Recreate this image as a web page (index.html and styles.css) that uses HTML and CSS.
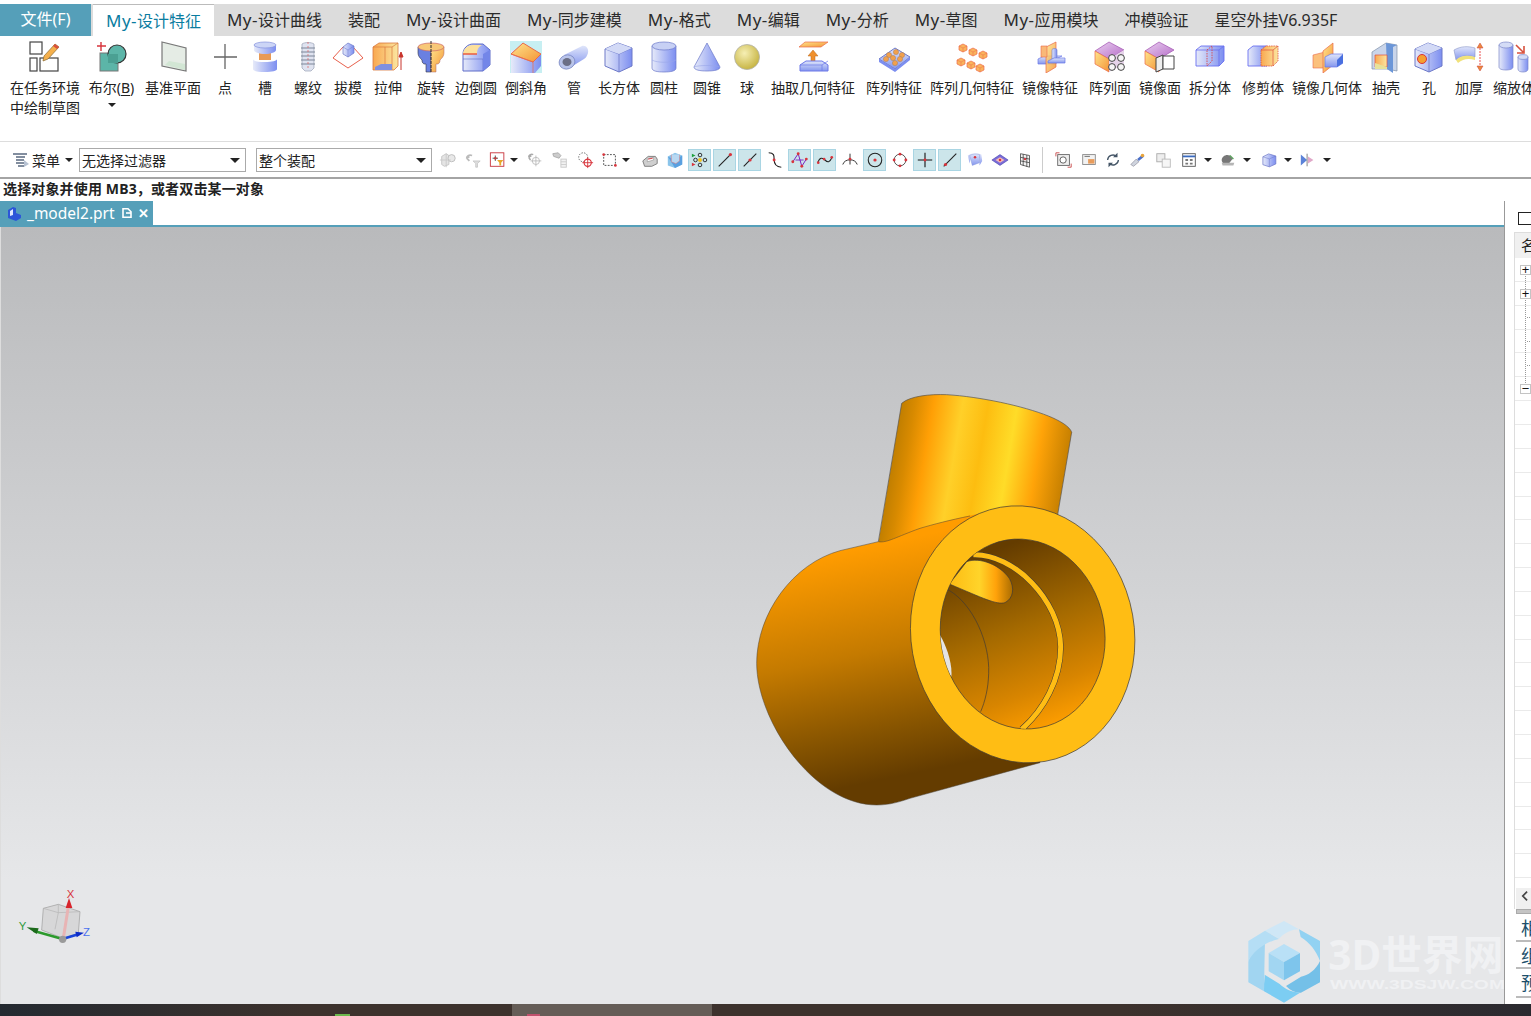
FILE: index.html
```html
<!DOCTYPE html>
<html lang="zh">
<head>
<meta charset="utf-8">
<title>NX</title>
<link rel="stylesheet" href="styles.css">
</head>
<body>
<svg class="defs" aria-hidden="true">
<defs>
<linearGradient id="gb" x1="0" y1="0" x2="1" y2="0"><stop offset="0" stop-color="#e6eaf9"/><stop offset="1" stop-color="#7c8ef0"/></linearGradient>
<linearGradient id="gbv" x1="0" y1="0" x2="0" y2="1"><stop offset="0" stop-color="#dfe5fa"/><stop offset="1" stop-color="#8496ee"/></linearGradient>
<linearGradient id="go" x1="0" y1="0" x2="1" y2="1"><stop offset="0" stop-color="#ffe48c"/><stop offset="1" stop-color="#f39436"/></linearGradient>
<linearGradient id="gy" x1="0" y1="0" x2="1" y2="0"><stop offset="0" stop-color="#f9a850"/><stop offset="1" stop-color="#fbe6a0"/></linearGradient>
<radialGradient id="gs" cx=".4" cy=".35" r=".7"><stop offset="0" stop-color="#f6efb4"/><stop offset="1" stop-color="#c4b13c"/></radialGradient>
<linearGradient id="gp" x1="0" y1="0" x2="1" y2="1"><stop offset="0" stop-color="#ead0f0"/><stop offset="1" stop-color="#b56cc8"/></linearGradient>
<g id="cube"><path d="M2 6l8-4 10 3v11l-9 4-9-3z" fill="url(#gb)" stroke="#6c78c8"/><path d="M2 6l9 3 9-4M11 9v11" fill="none" stroke="#6c78c8" stroke-width=".7"/></g>
<g id="ocube"><path d="M0 3l4-2 4 2v4l-4 2-4-2z" fill="#f9b45c" stroke="#ee6a4a" stroke-width=".7"/><path d="M0 3l4 2 4-2M4 5v4" fill="none" stroke="#ee6a4a" stroke-width=".5"/></g>
<g id="slab"><path d="M1 5l6-4h16l6 4v6H1z" fill="url(#gbv)" stroke="#6c78e8"/><path d="M1 5h22l6-4M23 5v6" fill="none" stroke="#6c78e8" stroke-width=".7"/></g>
</defs>
</svg>
<div class="app">
  <nav class="tabs">
    <span class="tab file">文件(F)</span>
    <span class="tab active"><span class="ltn">My-</span>设计特征</span>
    <span class="tab"><span class="ltn">My-</span>设计曲线</span>
    <span class="tab">装配</span>
    <span class="tab"><span class="ltn">My-</span>设计曲面</span>
    <span class="tab"><span class="ltn">My-</span>同步建模</span>
    <span class="tab"><span class="ltn">My-</span>格式</span>
    <span class="tab"><span class="ltn">My-</span>编辑</span>
    <span class="tab"><span class="ltn">My-</span>分析</span>
    <span class="tab"><span class="ltn">My-</span>草图</span>
    <span class="tab"><span class="ltn">My-</span>应用模块</span>
    <span class="tab">冲模验证</span>
    <span class="tab">星空外挂V6.935F</span>
  </nav>

  <section class="ribbon">
    <div class="item"><svg class="ic" viewBox="0 0 32 32"><g fill="#fff" stroke="#444" stroke-width="1.2"><rect x="1" y="1" width="12" height="12"/><rect x="1" y="17" width="7" height="13"/><rect x="11" y="17" width="18" height="13"/></g><path d="M26 3l4 3-11 12-5 2 1-5z" fill="#f5b04c" stroke="#8a6a30" stroke-width=".7"/><path d="M26 3l4 3-2 2-4-3z" fill="#d9503c"/></svg><span class="lb">在任务环境<br>中绘制草图</span></div>
    <div class="item"><svg class="ic" viewBox="0 0 32 32"><path d="M5 1v9M1 5h9" stroke="#d8343c" stroke-width="1.4"/><rect x="4" y="12" width="18" height="18" fill="#5cb5a8" stroke="#777"/><circle cx="21" cy="13" r="9" fill="#5cb5a8" stroke="#333" stroke-width="1.2"/><rect x="12" y="13" width="10" height="9" fill="#4ba093"/></svg><span class="lb">布尔(<u>B</u>)</span><i class="drop"></i></div>
    <div class="item"><svg class="ic" viewBox="0 0 32 32"><path d="M5 1l24 6v23L5 25z" fill="#e5ece5" stroke="#777" stroke-width="1.2"/><path d="M12 20l16 3v6L8 24z" fill="#d2e6d4"/></svg><span class="lb">基准平面</span></div>
    <div class="item"><svg class="ic" viewBox="0 0 32 32"><path d="M5 16h23M16 3v25" stroke="#666" stroke-width="1.3"/></svg><span class="lb">点</span></div>
    <div class="item"><svg class="ic" viewBox="0 0 32 32"><rect x="10" y="11" width="12" height="8" fill="#e89a56"/><path d="M5 4h22v5c0 2-5 4-11 4S5 11 5 9z" fill="url(#gb)"/><ellipse cx="16" cy="4" rx="11" ry="3" fill="#ccd5f6" stroke="#8592dc" stroke-width=".7"/><path d="M4 18c0 2 5 3 12 3s12-1 12-3v10c0 2-5 3-12 3S4 30 4 28z" fill="url(#gb)"/></svg><span class="lb">槽</span></div>
    <div class="item"><svg class="ic" viewBox="0 0 32 32"><path d="M10 3c3-2 9-2 12 0v24l-3 3h-6l-3-3z" fill="#dfe3f0" stroke="#9aa0b4" stroke-width=".7"/><path d="M9 7h14M9 11h14M9 15h14M9 19h14M9 23h14" stroke="#7d8598" stroke-width="1.2"/><path d="M16 1v28" stroke="#e06060" stroke-width=".7" stroke-dasharray="2 2"/></svg><span class="lb">螺纹</span></div>
    <div class="item"><svg class="ic" viewBox="0 0 32 32"><path d="M1 17l15 10 15-10L21 6H11z" fill="#fff" stroke="#e8604c"/><path d="M11 6l5-4 6 3v7l-6 4-5-3z" fill="url(#gb)" stroke="#6c78c8" stroke-width=".7"/><path d="M11 6l5 3 6-4M16 9v7" fill="none" stroke="#6c78c8" stroke-width=".5"/></svg><span class="lb">拔模</span></div>
    <div class="item"><svg class="ic" viewBox="0 0 32 32"><path d="M1 6l6-4h19v23l-4 4H1z" fill="url(#gy)" stroke="#d87a40" stroke-width=".8"/><path d="M1 6h19l6-4M13 6v17M20 6v23" fill="none" stroke="#d87a40" stroke-width=".7"/><path d="M3 26l6-3h11v6H3z" fill="#7f90e0"/><path d="M29 29V12m-2 4l2-5 2 5z" stroke="#c8342c" fill="#c8342c"/></svg><span class="lb">拉伸</span></div>
    <div class="item"><svg class="ic" viewBox="0 0 32 32"><path d="M3 6h13v25h-5v-8H9c-2-1-2-3-2-4-2-2-4-4-4-7z" fill="#6a80e0" stroke="#334" stroke-width=".6"/><path d="M16 6h13v6c0 3-2 5-4 7 0 1 0 3-2 4h-2v8h-5z" fill="url(#go)" stroke="#a66" stroke-width=".5"/><ellipse cx="16" cy="6" rx="13" ry="4" fill="#f8c878" stroke="#c66" stroke-width=".7"/><path d="M16 0v32" stroke="#333" stroke-width="1" stroke-dasharray="3 1"/></svg><span class="lb">旋转</span></div>
    <div class="item"><svg class="ic" viewBox="0 0 32 32"><path d="M3 13c0-6 5-10 10-10h10l7 6v15l-7 6H3z" fill="url(#gb)" stroke="#5e6cc8" stroke-width="1"/><path d="M3 13c0-5 5-9 10-9h9c-4 2-5 5-5 9z" fill="#fce09c"/><path d="M3 13h14" stroke="#ea5c40" stroke-width="1.5"/><path d="M3 18h20v12" fill="none" stroke="#5e6cc8" stroke-width=".6"/><path d="M23 13v17l7-6V9z" fill="#7386e8"/></svg><span class="lb">边倒圆</span></div>
    <div class="item"><svg class="ic" viewBox="0 0 32 32"><rect width="32" height="32" fill="#c7eff2"/><path d="M1 9v23h24l6-7V14z" fill="url(#gb)"/><path d="M1 13L13 2l18 11-8 8z" fill="url(#go)" stroke="#ea6a4a"/><path d="M23 21v11M1 13l22 8" fill="none" stroke="#ea6a4a" stroke-width=".7"/></svg><span class="lb">倒斜角</span></div>
    <div class="item"><svg class="ic" viewBox="0 0 32 32"><path d="M6 14L24 5c4-1 7 3 6 7-1 3-2 5-4 6L13 26z" fill="url(#gbv)"/><ellipse cx="9" cy="21" rx="8" ry="7" fill="#b9c4ea" stroke="#7583c0" stroke-width=".7" transform="rotate(-20 9 21)"/><ellipse cx="9" cy="21" rx="4.5" ry="4" fill="#6b6f86"/></svg><span class="lb">管</span></div>
    <div class="item"><svg class="ic" viewBox="0 0 32 32"><path d="M2 8l13-6 14 5v18l-13 6-14-6z" fill="url(#gb)" stroke="#6c78c8"/><path d="M2 8l14 5 13-6M16 13v18" fill="none" stroke="#6c78c8" stroke-width=".8"/><path d="M2 8l13-6 14 5-13 6z" fill="#d3daf6"/></svg><span class="lb">长方体</span></div>
    <div class="item"><svg class="ic" viewBox="0 0 32 32"><path d="M4 5v22c0 3 5 4 12 4s12-1 12-4V5z" fill="url(#gb)" stroke="#6c78c8" stroke-width=".7"/><ellipse cx="16" cy="5" rx="12" ry="4" fill="#c7d0f4" stroke="#6c78c8" stroke-width=".7"/><path d="M4 19c5 3 19 3 24 0" fill="none" stroke="#99a6e8" stroke-width=".6"/></svg><span class="lb">圆柱</span></div>
    <div class="item"><svg class="ic" viewBox="0 0 32 32"><path d="M16 2L3 26c0 3 6 4 13 4s13-1 13-4z" fill="url(#gb)" stroke="#6c78c8" stroke-width=".7"/><path d="M3 26c4-2 22-2 26 0" fill="none" stroke="#99a6e8" stroke-width=".6"/></svg><span class="lb">圆锥</span></div>
    <div class="item"><svg class="ic" viewBox="0 0 32 32"><circle cx="16" cy="16" r="12.5" fill="url(#gs)" stroke="#b0b0a8" stroke-width=".8"/></svg><span class="lb">球</span></div>
    <div class="item"><svg class="ic" viewBox="0 0 32 32"><path d="M2 6l6-5h23l-7 5z" fill="url(#go)" stroke="#ea6a4a" stroke-width=".7"/><path d="M16 9l-5 6h3v6h4v-6h3z" fill="#f0902c" stroke="#b86a20" stroke-width=".5"/><g transform="translate(2 19)"><use href="#slab"/></g></svg><span class="lb">抽取几何特征</span></div>
    <div class="item"><svg class="ic" viewBox="0 0 32 32"><path d="M1 18L17 7l15 9-15 12z" fill="url(#gbv)" stroke="#6c78c8"/><path d="M1 18v3l16 10 15-12v-3L17 28z" fill="#7c8ef0"/><g fill="#f2a04c" stroke="#a88060" stroke-width=".5"><circle cx="11" cy="14" r="2.6"/><circle cx="18" cy="11" r="2.6"/><circle cx="24" cy="14" r="2.6"/><circle cx="8" cy="18" r="2.6"/><circle cx="15" cy="17" r="2.6"/><circle cx="22" cy="18" r="2.6"/><circle cx="17" cy="22" r="2.6"/></g></svg><span class="lb">阵列特征</span></div>
    <div class="item"><svg class="ic" viewBox="0 0 32 32"><use href="#ocube" x="3" y="2"/><use href="#ocube" x="13" y="6"/><use href="#ocube" x="23" y="9"/><use href="#ocube" x="1" y="16"/><use href="#ocube" x="11" y="19"/><use href="#ocube" x="20" y="22"/></svg><span class="lb">阵列几何特征</span></div>
    <div class="item"><svg class="ic" viewBox="0 0 32 32"><path d="M4 18l6-3h18l-6 3v5H4z" fill="url(#gbv)" stroke="#6c78e8" stroke-width=".7"/><path d="M12 6l10-5v25l-10 6z" fill="url(#go)" fill-opacity=".85" stroke="#ea6a4a" stroke-width=".7"/><path d="M7 5h6v11H7z" fill="#f9b878" stroke="#ea6a4a" stroke-width=".6"/><path d="M18 9c0-2 5-2 5 0v9h-5z" fill="url(#gb)" stroke="#6c78c8" stroke-width=".6"/><path d="M14 20l6-3h11v5H14z" fill="url(#gbv)" stroke="#6c78e8" stroke-width=".7"/></svg><span class="lb">镜像特征</span></div>
    <div class="item"><svg class="ic" viewBox="0 0 32 32"><path d="M1 10l14-9 15 8-15 9z" fill="url(#gp)" stroke="#a050b0" stroke-width=".7"/><path d="M1 10l14 8v13L1 23z" fill="url(#go)" stroke="#ea6a4a" stroke-width=".7"/><path d="M15 18l15-9v14l-15 8z" fill="#e6d4ea"/><g fill="#f6f6f6" stroke="#444" stroke-width="1"><circle cx="18" cy="17" r="3.4"/><circle cx="27" cy="17" r="3.4"/><circle cx="18" cy="26" r="3.4"/><circle cx="27" cy="26" r="3.4"/></g></svg><span class="lb">阵列面</span></div>
    <div class="item"><svg class="ic" viewBox="0 0 32 32"><path d="M1 10l14-9 15 8-15 9z" fill="url(#gp)" stroke="#a050b0" stroke-width=".7"/><path d="M1 10l14 8v13L1 23z" fill="url(#go)" stroke="#ea6a4a" stroke-width=".7"/><path d="M12 17l7-3v14l-7 3z" fill="#eee" stroke="#444"/><path d="M19 15h11v13H19z" fill="#fff" stroke="#444"/></svg><span class="lb">镜像面</span></div>
    <div class="item"><svg class="ic" viewBox="0 0 32 32"><path d="M2 9l5-4h23v15l-5 5H2z" fill="url(#gb)" stroke="#6a70f0" stroke-width=".9"/><path d="M2 9h23l5-4M25 9v16" fill="none" stroke="#6a70f0" stroke-width=".8"/><path d="M13 9l5-4v15l-5 5z" fill="none" stroke="#d8484c" stroke-width=".9" stroke-dasharray="1.5 1"/></svg><span class="lb">拆分体</span></div>
    <div class="item"><svg class="ic" viewBox="0 0 32 32"><path d="M1 9l5-4h14v20H1z" fill="url(#gb)" stroke="#6a70f0" stroke-width=".9"/><path d="M14 9l5-4h12v15l-5 5H14z" fill="url(#gy)" stroke="#e05040" stroke-width=".8" stroke-dasharray="1.5 .8"/><path d="M14 9h12l5-4M26 9v16" fill="none" stroke="#e05040" stroke-width=".7"/></svg><span class="lb">修剪体</span></div>
    <div class="item"><svg class="ic" viewBox="0 0 32 32"><path d="M2 14l12-3v16H2z" fill="#fbc07c" stroke="#ea6a4a" stroke-width=".6"/><path d="M12 10l10-8v22l-10 8z" fill="url(#go)" stroke="#ea6a4a" stroke-width=".7"/><path d="M14 16l6-3h12v9l-6 4H14z" fill="url(#gbv)" stroke="#6c78e8" stroke-width=".7"/><path d="M26 19l6-6v9l-6 4z" fill="#4a70e0"/></svg><span class="lb">镜像几何体</span></div>
    <div class="item"><svg class="ic" viewBox="0 0 32 32"><path d="M2 11l14-9 11 2v26l-10-2H2z" fill="#c9d5ea" stroke="#8090a8" stroke-width=".7"/><path d="M16 2l11 2-4 2v26l-6-4z" fill="#6b96d8"/><path d="M5 14h12v12H5z" fill="url(#gy)" stroke="#e05040" stroke-width=".7"/><path d="M5 22l12 4v2H5z" fill="#e7e29a"/></svg><span class="lb">抽壳</span></div>
    <div class="item"><svg class="ic" viewBox="0 0 32 32"><path d="M2 8l13-6 14 5v18l-13 6-14-6z" fill="url(#gb)" stroke="#6c78c8"/><path d="M2 8l14 5 13-6M16 13v18" fill="none" stroke="#6c78c8" stroke-width=".8"/><path d="M2 8l13-6 14 5-13 6z" fill="#d3daf6"/><circle cx="9" cy="18" r="4.5" fill="#f5a030" stroke="#d8343c"/></svg><span class="lb">孔</span></div>
    <div class="item"><svg class="ic" viewBox="0 0 32 32"><path d="M1 9c7-4 14-4 21-2v9c-7-2-14-2-19 3z" fill="url(#gbv)" stroke="#8a96c8" stroke-width=".6"/><path d="M3 19c5-5 12-5 19-3v3c-7-2-12-1-17 3z" fill="#f1e27a"/><path d="M27 2l-3 5h6zM27 30l-3-5h6z" fill="#ec8a3c" stroke="#c8403c" stroke-width=".5"/><path d="M27 7v18" stroke="#ec5050" stroke-dasharray="2 1"/></svg><span class="lb">加厚</span></div>
    <div class="item"><svg class="ic" viewBox="0 0 32 32"><path d="M1 4v22c0 2 3 3 7 3s7-1 7-3V4z" fill="url(#gb)" stroke="#7c88c8" stroke-width=".7"/><ellipse cx="8" cy="4" rx="7" ry="3" fill="#d4dcf6" stroke="#7c88c8" stroke-width=".7"/><path d="M20 16v12c0 2 2 3 5 3s5-1 5-3V16z" fill="url(#gb)" stroke="#7c88c8" stroke-width=".7"/><ellipse cx="25" cy="16" rx="5" ry="2.4" fill="#d4dcf6" stroke="#7c88c8" stroke-width=".7"/><path d="M18 4l7 7m1-6v7h-7" fill="none" stroke="#d8503c" stroke-width="1.6"/></svg><span class="lb">缩放体</span></div>
  </section>

  <section class="toolbar">
    <svg class="menu-ic" viewBox="0 0 18 16"><path d="M1 2h14M4 5h9M4 8h8M4 11h8M6 14h6" stroke="#5a6a80" stroke-width="1.3"/><path d="M12 8l5 4-5 3z" fill="#b7c2d2"/></svg>
    <span class="menu-t">菜单</span><i class="caret menu-c"></i>
    <div class="select s1"><span>无选择过滤器</span><i class="caret"></i></div>
    <div class="select s2"><span>整个装配</span><i class="caret"></i></div>
    <div class="tb"><svg viewBox="0 0 20 20"><path d="M3 6l5-3 3 2v10l-5 2-3-2z" fill="#e4e4e4" stroke="#c4c4c4"/><circle cx="14" cy="8" r="4" fill="#e8e8e8" stroke="#bbb"/><path d="M1 10h12M8 3v15" stroke="#c8c8c8"/></svg></div>
    <div class="tb"><svg viewBox="0 0 20 20"><path d="M3 8c0-3 3-4 6-3M3 8l3-2M3 8l3 3" fill="none" stroke="#bbb" stroke-width="2"/><path d="M10 11h8l-3 3v4h-2v-4z" fill="#ddd" stroke="#bbb" stroke-width=".7"/></svg></div>
    <div class="tb"><svg viewBox="0 0 20 20"><rect x="1.5" y="2" width="15" height="15" fill="#fff" stroke="#c8343c"/><path d="M7 5v6M4 8h6" stroke="#444"/><circle cx="7" cy="8" r="1.4" fill="#c83c3c"/><path d="M9 10h7l-2.500 3v3h-2v-3z" fill="#e8a828"/></svg></div>
    <i class="caret tc"></i>
    <div class="tb"><svg viewBox="0 0 20 20"><path d="M3 7c0-3 3-4 5-3M3 7l3-2M3 7l2 3" fill="none" stroke="#aaa" stroke-width="1.700"/><circle cx="11" cy="11" r="4" fill="none" stroke="#bbb"/><path d="M11 5v12M5 11h12" stroke="#bbb"/></svg></div>
    <div class="tb"><svg viewBox="0 0 20 20"><path d="M2 3l6-1 3 3-2 3-6-2z" fill="#ccc" stroke="#aaa"/><rect x="11" y="9" width="6" height="9" fill="#f2f2f2" stroke="#c8c8c8"/><path d="M11 12h6M11 15h6" stroke="#ccc"/></svg></div>
    <div class="tb"><svg viewBox="0 0 20 20"><circle cx="8" cy="7" r="5" fill="none" stroke="#555" stroke-dasharray="1.500 1.500"/><circle cx="13" cy="13" r="4" fill="#fff" stroke="#d8343c" stroke-width="1.300"/><path d="M13 7v12M7 13h12" stroke="#d8343c"/></svg></div>
    <div class="tb"><svg viewBox="0 0 20 20"><rect x="3" y="4" width="13" height="12" fill="none" stroke="#444" stroke-dasharray="2 1.500"/><circle cx="3" cy="4" r="1.500" fill="#d8343c"/><circle cx="16" cy="16" r="1.500" fill="#d8343c"/></svg></div>
    <i class="caret tc wide"></i>
    <div class="tb"><svg viewBox="0 0 20 20"><path d="M2 11l6-5h8l2 3v5l-6 3H4z" fill="#cfcfcf" stroke="#777"/><path d="M7 9l7-2v3l-7 2z" fill="#fff" stroke="#888" stroke-width=".6"/><path d="M8 9l5-1" stroke="#d8343c"/></svg></div>
    <div class="tb"><svg viewBox="0 0 20 20"><path d="M2 6l8-4 8 3v10l-8 4-8-3z" fill="#8ac4ea"/><path d="M2 6l8 4 8-5v10l-8 4z" fill="#5aa0e0"/><path d="M6 4v8l5 2 4-3V4" fill="#b8d8f2" stroke="#e08080" stroke-width=".6"/></svg></div>
    <div class="tb"><b class="on"></b><svg viewBox="0 0 20 20"><g fill="none" stroke="#222"><circle cx="10" cy="4.500" r="2"/><circle cx="10" cy="15.500" r="2"/><circle cx="15.500" cy="10" r="2"/><circle cx="5" cy="10" r="2"/></g><circle cx="10" cy="10" r="2.200" fill="#f2c21c"/><path d="M1 3l4 2-4 2z" fill="#1fa03c"/><path d="M1 13l4 2-4 2z" fill="#d8343c"/></svg></div>
    <div class="tb"><b class="on"></b><svg viewBox="0 0 20 20"><path d="M3 17L16 4" stroke="#222" stroke-width="1.200"/><circle cx="16" cy="4" r="1.800" fill="#d8343c"/></svg></div>
    <div class="tb"><b class="on"></b><svg viewBox="0 0 20 20"><path d="M3 17L17 3" stroke="#222" stroke-width="1.200"/><circle cx="10" cy="10" r="1.800" fill="#d8343c"/></svg></div>
    <div class="tb"><svg viewBox="0 0 20 20"><path d="M3 2c6 0 6 3 6 7s1 9 8 9" fill="none" stroke="#222" stroke-width="1.200"/><circle cx="9" cy="10" r="1.600" fill="#d8343c"/></svg></div>
    <div class="tb"><b class="on"></b><svg viewBox="0 0 20 20"><path d="M2 12l6-9 4 14 5-8" fill="none" stroke="#7a20c0" stroke-width="1.100"/><path d="M5 10h9" stroke="#7a20c0"/><g fill="#d8343c"><circle cx="2" cy="12" r="1.600"/><circle cx="8" cy="3" r="1.600"/><circle cx="12" cy="17" r="1.600"/><circle cx="17" cy="9" r="1.600"/></g></svg></div>
    <div class="tb"><b class="on"></b><svg viewBox="0 0 20 20"><path d="M2 13c2-6 5-6 8-3s5 3 8-3" fill="none" stroke="#222" stroke-width="1.200"/><g fill="#d8343c"><circle cx="2.500" cy="13" r="1.500"/><circle cx="9" cy="9" r="1.500"/><circle cx="17.500" cy="7" r="1.500"/></g></svg></div>
    <div class="tb"><svg viewBox="0 0 20 20"><path d="M2 15c2-7 14-7 16 0M10 3v12" fill="none" stroke="#333" stroke-width="1.100"/><circle cx="10" cy="9" r="1.600" fill="#d8343c"/></svg></div>
    <div class="tb"><b class="on"></b><svg viewBox="0 0 20 20"><circle cx="10" cy="10" r="7.500" fill="none" stroke="#222" stroke-width="1.200"/><circle cx="10" cy="10" r="1.800" fill="#d8343c"/></svg></div>
    <div class="tb"><svg viewBox="0 0 20 20"><circle cx="10" cy="10" r="6.500" fill="none" stroke="#555" stroke-width="1.100"/><g fill="#d8343c"><circle cx="10" cy="3.500" r="1.600"/><circle cx="3.500" cy="10" r="1.600"/><circle cx="16.500" cy="10" r="1.600"/><circle cx="10" cy="16.500" r="1.600"/></g></svg></div>
    <div class="tb"><b class="on"></b><svg viewBox="0 0 20 20"><path d="M2 10h16M10 2v16" stroke="#111" stroke-width="1.200"/><circle cx="10" cy="10" r="1.600" fill="#d8343c"/></svg></div>
    <div class="tb"><b class="on"></b><svg viewBox="0 0 20 20"><path d="M3 17L17 3" stroke="#222" stroke-width="1.200"/><circle cx="5" cy="15" r="1.800" fill="#d8343c"/></svg></div>
    <div class="tb"><svg viewBox="0 0 20 20"><path d="M2 5c5-3 10-3 15-1l1 7-3 5V8C11 5 6 6 5 8l-1 6z" fill="url(#gbv)"/><path d="M4 5c4-2 7-2 11-1v9l-8 3z" fill="url(#gbv)" stroke="#8a9ad8" stroke-width=".5"/><circle cx="10" cy="7" r="1.400" fill="#d8343c"/></svg></div>
    <div class="tb"><svg viewBox="0 0 20 20"><path d="M1 10l9-6 9 6-9 6z" fill="#7c6cd8" stroke="#4a4ab0" stroke-width=".7"/><path d="M5 10l5-3 5 3-5 3z" fill="#f4bcb8"/><circle cx="10" cy="10" r="1.400" fill="#d8343c"/></svg></div>
    <div class="tb"><svg viewBox="0 0 20 20"><path d="M5 3l10 2v13L5 15zM5 7l10 2M5 11l10 2M8 3.500v13M12 4.500v13" fill="#f4f4f4" stroke="#333" stroke-width=".8"/><circle cx="10" cy="9" r="1.300" fill="#d8343c"/></svg></div>
    <i class="sep"></i>
    <div class="tb"><svg viewBox="0 0 20 20"><rect x="3" y="4" width="13" height="12" fill="#eee" stroke="#666"/><circle cx="9" cy="10" r="3.500" fill="#fff" stroke="#555"/><path d="M1 2h4M1 2v4M18 18h-4M18 18v-4" stroke="#c84848"/></svg></div>
    <div class="tb"><svg viewBox="0 0 20 20"><rect x="3" y="4" width="14" height="11" fill="#f2f2f2" stroke="#888"/><path d="M9 9h7v5H9z" fill="#e89c5c"/><path d="M5 6h6" stroke="#666"/></svg></div>
    <div class="tb narrow"><svg viewBox="0 0 20 20"><path d="M4 10a6 6 0 0 1 10-4M16 10a6 6 0 0 1-10 4" fill="none" stroke="#456" stroke-width="1.500"/><path d="M15 2v5h-5zM5 18v-5h5z" fill="#456"/></svg></div>
    <div class="tb wider"><svg viewBox="0 0 20 20"><path d="M2 15l6-6 3 3-6 5z" fill="#cfd4de" stroke="#778" stroke-width=".6"/><path d="M9 9l6-5 2 2-6 5z" fill="#4b70c8"/><circle cx="15" cy="5" r="2" fill="#e8a43c"/></svg></div>
    <div class="tb"><svg viewBox="0 0 20 20"><rect x="2" y="3" width="9" height="9" fill="#eee" stroke="#aaa"/><rect x="8" y="9" width="9" height="9" fill="#f6f6f6" stroke="#bbb"/></svg></div>
    <div class="tb"><svg viewBox="0 0 20 20"><rect x="3" y="3" width="14" height="14" fill="#fff" stroke="#555"/><path d="M3 6h14" stroke="#3a6abf" stroke-width="2"/><path d="M6 9h3v2H6zM11 9h3v2h-3zM6 13h3v2H6zM11 13h3v2h-3z" fill="#777"/></svg></div>
    <i class="caret tc2"></i>
    <div class="tb"><svg viewBox="0 0 20 20"><path d="M3 10c0-4 5-7 9-5l3 4-4 5c-3 2-8 0-8-4z" fill="#777"/><path d="M3 13h14l-1 3H4z" fill="#b5b5b5"/><path d="M12 5l4 4" stroke="#59a05c" stroke-width="1.500"/></svg></div>
    <i class="caret tc2"></i>
    <div class="tb m2"><svg viewBox="0 0 20 20"><use href="#cube" transform="scale(.8) translate(2 2)"/></svg></div>
    <i class="caret tc2"></i>
    <div class="tb"><svg viewBox="0 0 20 20"><path d="M2 4l7 6-7 6z" fill="#5b82d8"/><path d="M10 6l6 4-6 4z" fill="#e0a8c8"/><path d="M9 3v14" stroke="#777"/></svg></div>
    <i class="caret tc2"></i>
  </section>

  <div class="prompt">选择对象并使用 MB3，或者双击某一对象</div>

  <main class="work">
    <div class="left">
      <div class="doc-row">
        <div class="doc-tab">
          <svg class="doc-ic" viewBox="0 0 16 16"><path d="M2 5l5-3 3 1v5l5 2v3l-5 3-8-3z" fill="#2c56d8"/><path d="M4 6l3-2v6l-3 1z" fill="#dfe8ff"/></svg>
          <span class="doc-name">_model2.prt</span>
          <svg class="doc-pg" viewBox="0 0 10 10"><path d="M1 .8h5l3 3v5.400H1z" fill="none" stroke="#fff" stroke-width="1.600"/><path d="M4 5h5" stroke="#fff" stroke-width="1.600"/></svg>
          <span class="doc-x">✕</span>
        </div>
      </div>
      <div class="viewport">
        <svg class="model" viewBox="0 0 1230 1320">
          <defs>
            <linearGradient id="mTop" gradientUnits="userSpaceOnUse" x1="440" y1="250" x2="975" y2="340"><stop offset="0" stop-color="#b87a00"/><stop offset=".1" stop-color="#d88a00"/><stop offset=".2" stop-color="#ff9f05"/><stop offset=".36" stop-color="#ffd029"/><stop offset=".5" stop-color="#fdbd10"/><stop offset=".66" stop-color="#ffdc28"/><stop offset=".82" stop-color="#ffa308"/><stop offset="1" stop-color="#c07c00"/></linearGradient>
            <linearGradient id="mBody" gradientUnits="userSpaceOnUse" x1="330" y1="510" x2="470" y2="1190"><stop offset="0" stop-color="#ff9c00"/><stop offset=".45" stop-color="#c47a00"/><stop offset=".8" stop-color="#855300"/><stop offset="1" stop-color="#643c00"/></linearGradient>
            <linearGradient id="mBore" gradientUnits="userSpaceOnUse" x1="800" y1="500" x2="900" y2="1040"><stop offset="0" stop-color="#643c00"/><stop offset=".45" stop-color="#a56a00"/><stop offset=".8" stop-color="#d88500"/><stop offset="1" stop-color="#fb9c00"/></linearGradient>
            <linearGradient id="mSlot" gradientUnits="userSpaceOnUse" x1="635" y1="600" x2="820" y2="600"><stop offset="0" stop-color="#fdbd14"/><stop offset=".45" stop-color="#ffd42a"/><stop offset=".72" stop-color="#ffa20a"/><stop offset="1" stop-color="#a66a00"/></linearGradient>
            <clipPath id="mHole"><ellipse cx="848" cy="762" rx="246" ry="286" transform="rotate(-10 848 762)"/></clipPath>
          </defs>
          <path d="M485 70C510 48 570 42 620 44C720 50 850 78 925 108C960 122 990 140 995 157L950 420L415 490Z" fill="url(#mTop)"/>
          <path d="M415 485L485 70C510 48 570 42 620 44C720 50 850 78 925 108C960 122 990 140 995 157L952 410" fill="none" stroke="#55504a" stroke-width="2"/>
          <path d="M415 485C440 490 470 470 540 445C610 425 700 400 850 378L1000 900L900 1148L510 1255C480 1265 450 1275 410 1275C220 1275 50 1020 50 850C50 700 160 550 300 512Z" fill="url(#mBody)"/>
          <path d="M900 1148L510 1255C480 1265 450 1275 410 1275C220 1275 50 1020 50 850C50 700 160 550 300 512L415 485C440 490 470 470 540 445C580 433 630 420 690 408" fill="none" stroke="#4a4238" stroke-width="1.500"/>
          <ellipse cx="848" cy="763" rx="335" ry="387" transform="rotate(-10 848 763)" fill="#ffbd14" stroke="#3e3a36" stroke-width="2"/>
          <ellipse cx="848" cy="762" rx="246" ry="286" transform="rotate(-10 848 762)" fill="url(#mBore)" stroke="#3e3a36" stroke-width="2"/>
          <g clip-path="url(#mHole)">
            <path d="M700 524C820 520 960 660 962 800C962 900 910 990 845 1048" fill="none" stroke="#3e3a36" stroke-width="18"/>
            <path d="M700 524C820 520 960 660 962 800C962 900 910 990 845 1048" fill="none" stroke="#ffbd14" stroke-width="15"/>
            <path d="M680 545C720 530 780 555 808 595C825 625 820 655 795 668C770 675 730 655 628 612Z" fill="url(#mSlot)" stroke="#3e3a36" stroke-width="2"/>
            <path d="M622 628C700 670 750 790 746 880C745 925 735 965 722 995" fill="none" stroke="#3e3a36" stroke-width="2"/>
            <path d="M600 765C618 795 638 850 634 890C615 865 600 820 598 765Z" fill="#e4e4e4"/>
          </g>
        </svg>
        <svg class="triad" viewBox="0 0 360 402">
          <path d="M130 115l45-12 65 22-5 65-45 15-65-25z" fill="#d0d0d0" fill-opacity=".7" stroke="#a8a8a8" stroke-width="2.500"/>
          <path d="M130 115l45 13 65-3M175 103v25l-10 50" fill="none" stroke="#b4b4b4" stroke-width="2"/>
          <path d="M190 205l15-95" stroke="#e8b4b4" stroke-width="9"/>
          <path d="M207 84l-10 30 20 0z" fill="#d8242c"/>
          <path d="M190 208L100 182" stroke="#2c9a2c" stroke-width="8"/>
          <path d="M80 172l36 3-6 17z" fill="#1c6a1c"/>
          <path d="M190 206l40-12" stroke="#1a44d8" stroke-width="8"/>
          <path d="M252 188l-26-3 4 17z" fill="#0c2cc8"/>
          <circle cx="188" cy="208" r="11" fill="#9a9a9a"/>
          <text class="ax ax-x" x="200" y="84">X</text>
          <text class="ax ax-y" x="56" y="180">Y</text>
          <text class="ax ax-z" x="249" y="198">Z</text>
        </svg>
        <svg class="mark" viewBox="0 0 903 402">
          <path d="M162 153l45 25c-20 0-40 8-60 28l-42-24z" fill="#cfe7f6"/>
          <path d="M207 178l63 35v60c-12-30-30-55-58-72z" fill="#92d2f2"/>
          <path d="M270 273v64l-60 33 3-2c-15 2-30-5-45-20l45-28c20-3 45-20 57-47z" fill="#74c0e8"/>
          <path d="M210 368l-48 30-60-34c-2-20 3-40 2-50l45 28c15 15 35 24 61 26z" fill="#7ccdf3"/>
          <path d="M102 364l-47-27v-62c5-20 30-60 50-68l-2 95c0 20 0 45-1 62z" fill="#a1d5f1"/>
          <path d="M55 275v-62l50-31 42 25c-45 10-80 40-92 68z" fill="#b5def5"/>
          <path d="M162 222l48 27-48 27-46-27z" fill="#b9e0f6"/>
          <path d="M116 249l46 27v55l-46-27z" fill="#a2d6f2"/>
          <path d="M210 249v55l-48 27v-55z" fill="#7ec5ec"/>
          <text class="mk-a" x="295" y="300">3D世界网</text>
          <text class="mk-b" x="300" y="358" textLength="525" lengthAdjust="spacingAndGlyphs">WWW.3DSJW.COM</text>
        </svg>
      </div>
    </div>
    <aside class="panel">
      <div class="p-top"><i class="p-win"></i></div>
      <div class="tree">
        <div class="t-head">名称</div>
        <div class="t-body">
          <i class="dots"></i>
          <div class="t-row"><i class="tg">+</i></div>
          <div class="t-row"><i class="tg">+</i></div>
          <div class="t-row"><i class="hd"></i></div>
          <div class="t-row"><i class="hd"></i></div>
          <div class="t-row"><i class="hd"></i></div>
          <div class="t-row"><i class="tg">−</i></div>
        </div>
        <div class="chev"><svg viewBox="0 0 10 14"><path d="M8 2L3 7l5 5" fill="none" stroke="#444" stroke-width="2"/></svg></div>
      </div>
      <div class="bar"></div>
      <div class="acc a1">相依性</div>
      <div class="acc a2">组件</div>
      <div class="acc a3">预览</div>
    </aside>
  </main>

  <footer class="taskbar">
    <span class="task-a"><i class="peek green"></i></span>
    <span class="task-b"><i class="peek pink"></i></span>
    <span class="task-c"></span>
  </footer>
</div>
</body>
</html>
```
FILE: styles.css
```css
* { box-sizing: border-box; }
html, body { margin: 0; padding: 0; }
body { width: 1531px; height: 1016px; overflow: hidden; background: #fff; color: #222; font-family: "Noto Sans", "Noto Sans CJK SC", sans-serif; }
i, b { display: block; font-style: normal; font-weight: normal; }
.defs { position: absolute; width: 0; height: 0; }
.app { width: 1531px; height: 1016px; display: flex; flex-direction: column; overflow: hidden; }

/* tabs */
.tabs { height: 36px; flex: none; background: #dcdcdc; border-top: 4px solid #fff; display: flex; align-items: stretch; font-size: 16px; color: #2b2b2b; white-space: nowrap; }
.tab { padding: 0 13px; line-height: 32px; }
.ltn { font-size: 17px; letter-spacing: .45px; }
.tab.file { width: 91px; margin-right: 2px; padding: 0; text-align: center; background: #559fb9; color: #fff; line-height: 31px; }
.tab.active { width: 121px; padding: 0; text-align: center; background: #fff; color: #0a7ca0; border-top: 1px solid #bbb; line-height: 31px; }

/* ribbon */
.ribbon { height: 106px; flex: none; display: grid; grid-template-columns: 74px 59px 64px 40px 40px 46px 34px 46px 40px 50px 50px 46px 44px 46px 40px 40px 92px 70px 86px 70px 50px 50px 50px 56px 72px 46px 40px 40px 50px; padding: 5px 0 0 8px; font-size: 14px; line-height: 20px; color: #222; overflow: hidden; white-space: nowrap; border-bottom: 1px solid #ddd; }
.item { display: flex; flex-direction: column; align-items: center; min-width: 0; }
.ic { width: 32px; height: 32px; flex: none; }
.lb { margin-top: 5px; text-align: center; }
.lb u { text-underline-offset: 2px; }
.drop { width: 0; height: 0; margin-top: 5px; border: 4px solid transparent; border-top: 4px solid #222; border-bottom: 0; }

/* toolbar */
.toolbar { height: 37px; flex: none; display: flex; align-items: center; padding: 1px 0 0 12px; border-bottom: 2px solid #a4a4a4; font-size: 14px; white-space: nowrap; }
.menu-ic { width: 18px; height: 16px; margin-right: 2px; }
.menu-t { width: 33px; }
.caret { flex: none; width: 0; height: 0; border-style: solid; border-width: 4px 4px 0 4px; border-color: #222 transparent transparent transparent; }
.menu-c { margin-right: 6px; }
.select { height: 24px; border: 1px solid #aaa; display: flex; align-items: center; justify-content: space-between; padding: 0 5px 0 2px; background: #fff; }
.select .caret { border-width: 5px 5px 0 5px; }
.s1 { width: 167px; margin-right: 10px; }
.s2 { width: 176px; margin-right: 3px; }
.tb { position: relative; flex: none; width: 25px; height: 24px; display: flex; align-items: center; justify-content: center; }
.tb svg { position: relative; width: 18px; height: 18px; }
.tb.narrow { width: 23px; }
.tb.wider { width: 27px; }
.tb.m2 { margin-left: 2px; }
.on { position: absolute; left: 1px; top: 1px; width: 23px; height: 22px; background: #cce5ea; border: 1px solid #a9d5e3; }
.tc { margin: 0 4px 0 0; }
.tc.wide { margin: 0 7px 0 0; }
.tc2 { margin: 0 3px; }
.sep { flex: none; width: 1px; height: 26px; margin: 0 8px 0 5px; background: #ccc; }

/* prompt */
.prompt { height: 22px; flex: none; padding-left: 3px; font-size: 14px; font-weight: 700; letter-spacing: .15px; line-height: 20px; color: #222; white-space: nowrap; }

/* workspace */
.work { flex: 1; min-height: 0; display: flex; }
.left { width: 1504px; flex: none; display: flex; flex-direction: column; }
.doc-row { height: 26px; flex: none; border-bottom: 2px solid #559fb9; }
.doc-tab { width: 153px; height: 24px; background: #559fb9; color: #fff; display: flex; align-items: center; padding-left: 6px; font-size: 15.500px; }
.doc-ic { width: 16px; height: 16px; flex: none; margin-right: 5px; }
.doc-name { width: 95px; }
.doc-pg { width: 10px; height: 10px; flex: none; margin-right: 6px; }
.doc-x { font-size: 13px; font-weight: 700; }
.viewport { position: relative; flex: 1; overflow: hidden; background: linear-gradient(180deg, #b9babc 0%, #e6e7e9 84%, #e6e7e9 100%); border-left: 1px solid #ddd; }
.model { position: absolute; left: 739px; top: 153px; width: 410px; height: 440px; }
.triad { position: absolute; left: -1px; bottom: 0; width: 120px; height: 134px; }
.ax { font-family: "Liberation Sans", sans-serif; font-size: 34px; }
.ax-x { fill: #d8343c; }
.ax-y { fill: #2c9a3c; }
.ax-z { fill: #4a70f0; }
.mark { position: absolute; left: 1229px; bottom: 0; width: 301px; height: 134px; }
.mk-a { font-family: "Noto Sans", "Noto Sans CJK SC", sans-serif; font-size: 122px; font-weight: 700; fill: #f0f1f3; }
.mk-b { font-family: "Liberation Sans", sans-serif; font-size: 36px; font-weight: 700; fill: #f0f1f3; }

/* side panel */
.panel { width: 27px; flex: none; border-left: 1px solid #999; padding-left: 9px; display: flex; flex-direction: column; overflow: hidden; background: #fff; }
.p-top { height: 31px; flex: none; padding: 11px 0 0 4px; }
.p-win { width: 30px; height: 13px; border: 1.500px solid #222; }
.tree { flex: 1; min-height: 0; display: flex; flex-direction: column; border-left: 1px solid #ddd; border-top: 1px solid #ddd; width: 40px; }
.t-head { height: 25px; flex: none; background: #f0f0f0; padding-left: 6px; font-size: 15px; line-height: 25px; white-space: nowrap; }
.t-body { position: relative; flex: 1; min-height: 0; overflow: hidden; background: repeating-linear-gradient(180deg, #fff 0, #fff 22.850px, #eaeaea 22.850px, #eaeaea 23.850px); padding-left: 5px; }
.t-row { height: 23.850px; display: flex; align-items: center; }
.tg { position: relative; width: 11px; height: 10px; background: #fff; border: 1px solid #c4c4c4; font-family: "Liberation Sans", sans-serif; font-size: 13px; line-height: 8px; text-align: center; color: #111; }
.hd { width: 5px; margin-left: 7px; border-top: 1px dotted #999; }
.dots { position: absolute; left: 10px; top: 15px; height: 112px; border-left: 1px dotted #999; }
.chev { height: 21px; flex: none; background: #f0f0f0; margin-left: 1px; padding: 0 0 5px 4px; display: flex; align-items: center; }
.chev svg { width: 9px; height: 12px; }
.bar { height: 5px; flex: none; background: #c4c4c4; border: 1px solid #aaa; margin-left: 2px; width: 20px; }
.acc { flex: none; margin-left: 2px; width: 30px; padding-left: 5px; border-bottom: 2px solid #bbb; font-size: 18px; color: #1c4f6b; white-space: nowrap; overflow: hidden; line-height: 28px; }
.a1 { height: 28px; }
.a2 { height: 27px; }
.a3 { height: 29px; margin-bottom: 6px; }

/* taskbar */
.taskbar { height: 12px; flex: none; display: flex; background: linear-gradient(90deg, #242a31 0, #3d322d 20%); overflow: hidden; }
.task-a { width: 512px; position: relative; }
.task-b { width: 200px; background: #655d57; position: relative; }
.task-c { flex: 1; background: linear-gradient(90deg, #3d322d 0, #3d322d 50%, #2b2a30 100%); }
.peek { position: absolute; height: 2px; bottom: 0; }
.green { left: 335px; width: 15px; background: #6cb84c; }
.pink { left: 15px; width: 13px; background: #c0506c; }
```
